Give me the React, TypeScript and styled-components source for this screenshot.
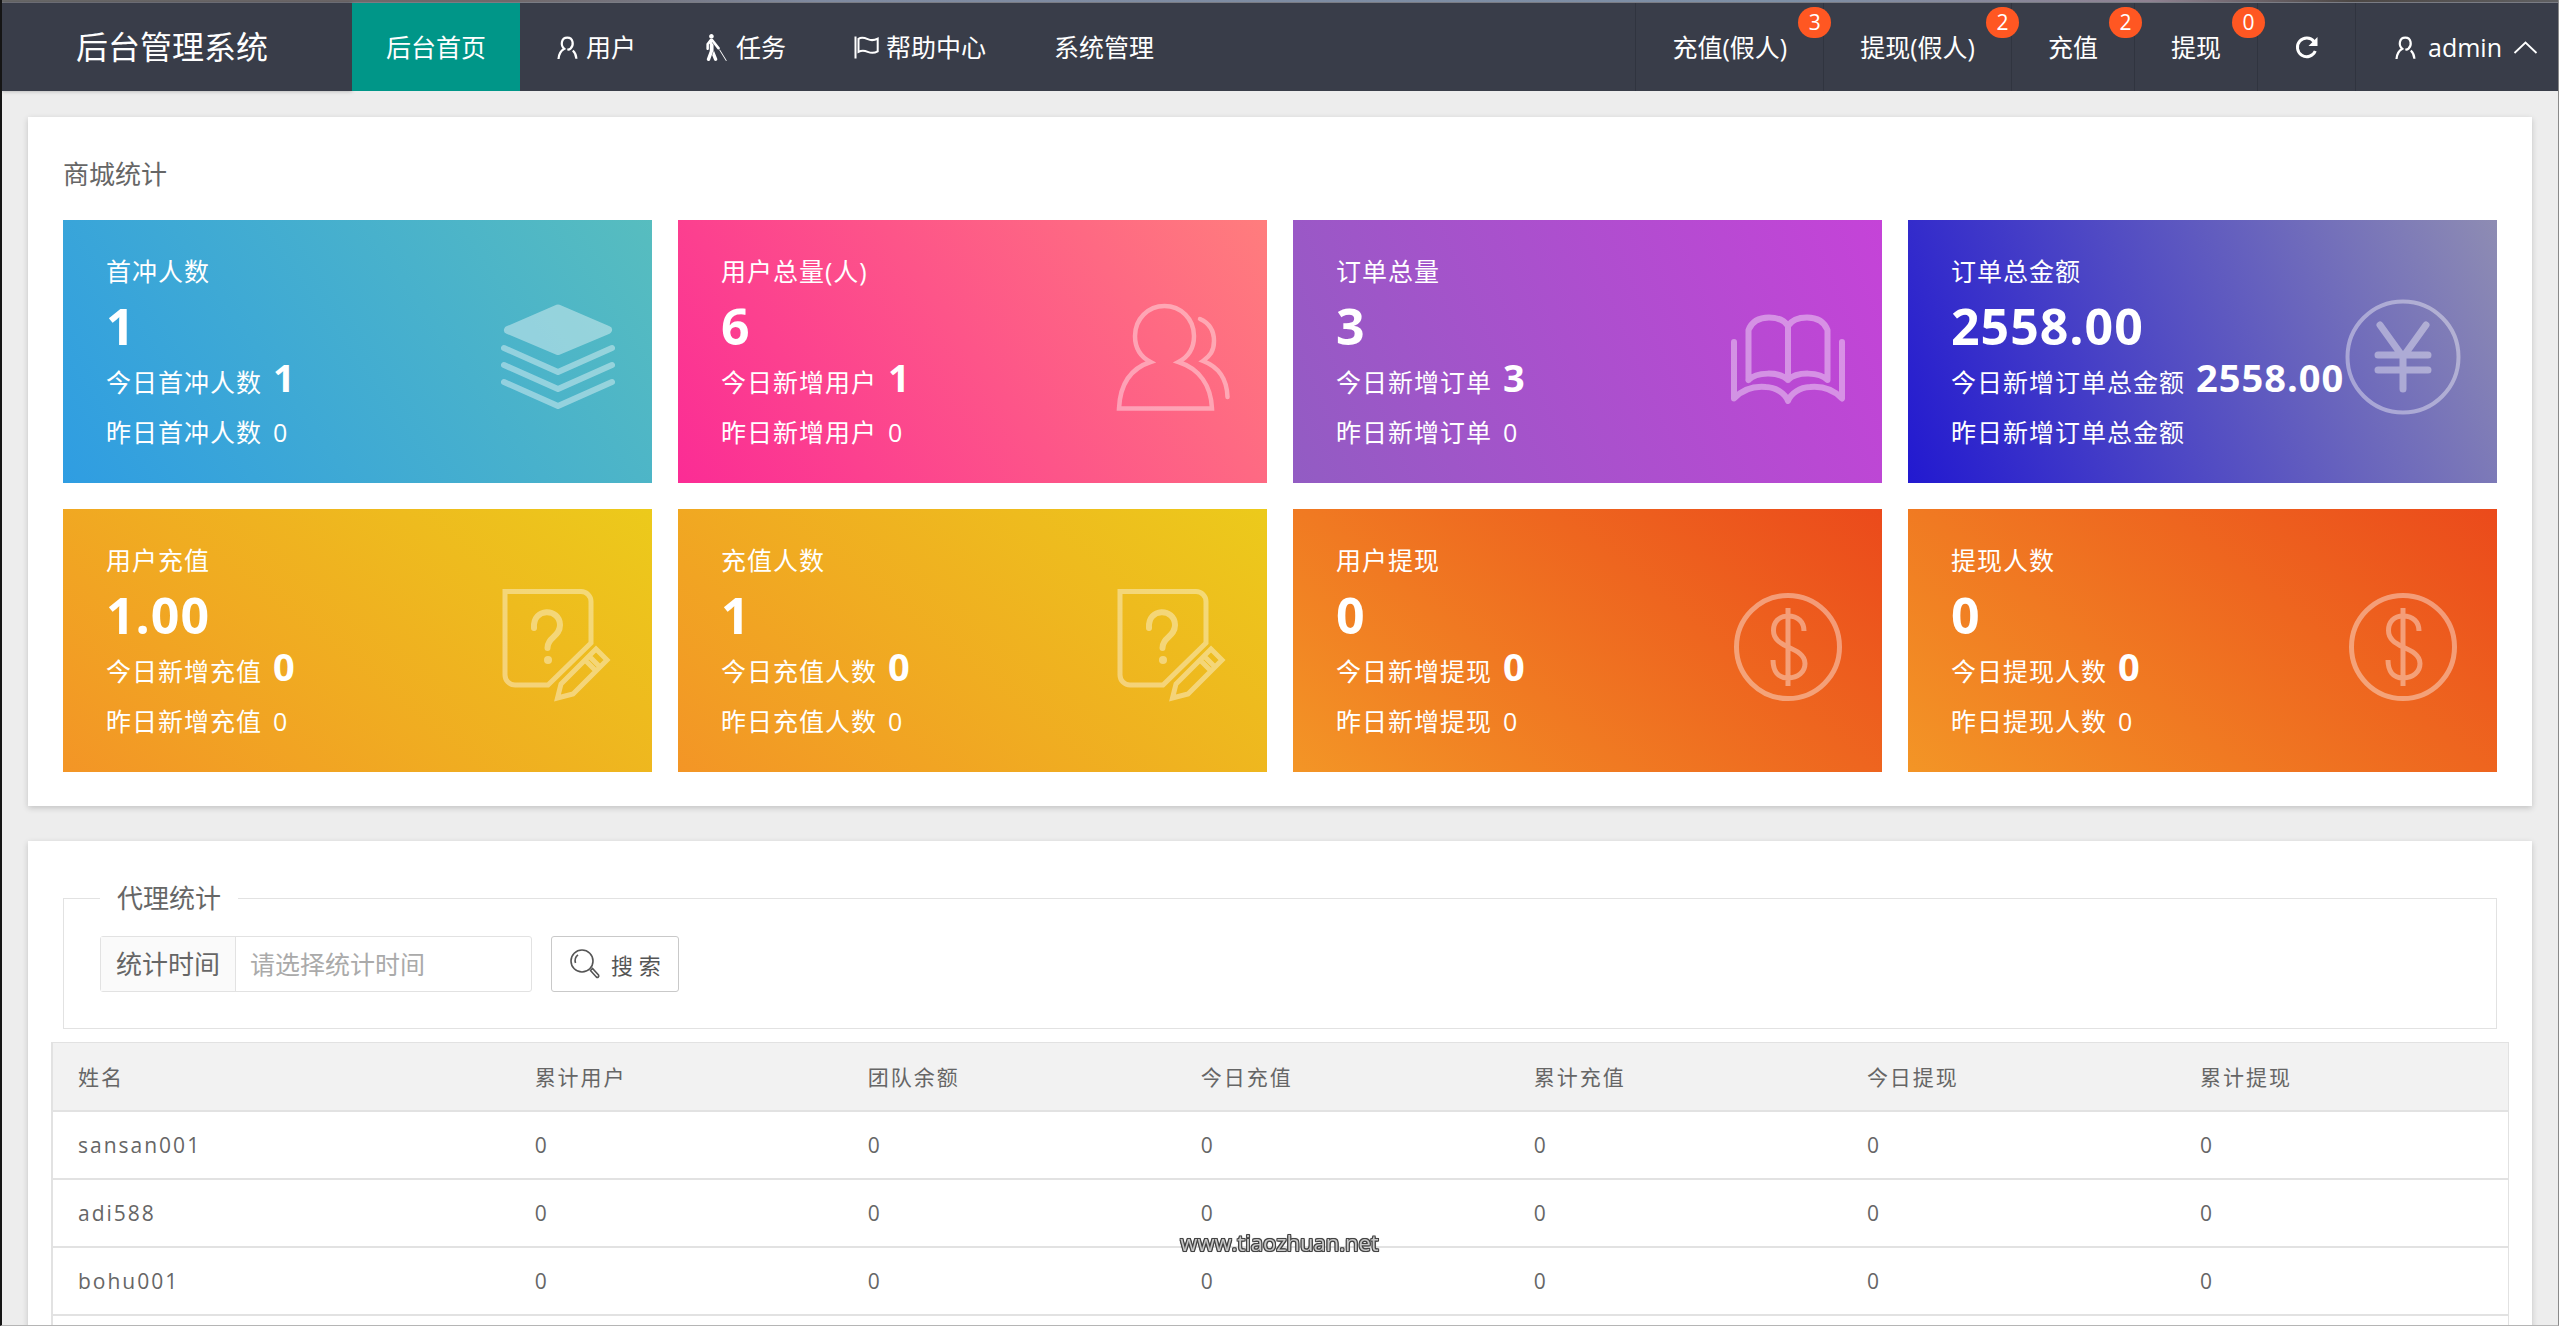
import React from "react";
import styled, { createGlobalStyle } from "styled-components";
import { FaBlind } from "react-icons/fa";

const GlobalStyle = createGlobalStyle`
  *, *::before, *::after { box-sizing: border-box; }
  body {
    margin: 0;
    background: #ededed;
    color: #666;
    font-family: "Open Sans", "Noto Sans CJK SC", sans-serif;
    font-size: 26px;
  }
  a { color: inherit; text-decoration: none; }
`;

const Shell = styled.div`
  height: 100vh;
  display: flex;
  flex-direction: column;
  overflow: hidden;
  border-left: 2px solid #151515;
  border-right: 1px solid #8a8a8a;
  border-bottom: 1px solid #b5b5b5;
`;

const TopStrip = styled.div`
  flex: none;
  height: 3px;
  margin-left: -2px;
  border-bottom: 1px solid #7a7c84;
  background: linear-gradient(90deg, #6a6a6a, #70686a 20%, #7f8aa0 32%, #7d8fa6 70%, #8f8292 84%, #4c4744 92%, #606062);
`;

const Header = styled.header`
  flex: none;
  height: 88px;
  display: flex;
  background: #393d49;
  color: #fff;
  font-size: 25px;
  line-height: 88px;
  white-space: nowrap;
`;

const Brand = styled.h1`
  margin: 0;
  width: 350px;
  padding-left: 74px;
  font-size: 32px;
  font-weight: 400;
  box-shadow: 0 0 4px rgba(0, 0, 0, 0.3);
`;

const Menu = styled.nav`
  display: flex;
  flex: 1;
`;

const MenuLink = styled.a<{ $active?: boolean }>`
  display: flex;
  align-items: center;
  gap: 7px;
  padding: 0 34px;
  background: ${(p) => (p.$active ? "#009688" : "transparent")};
`;

const Tools = styled.nav`
  display: flex;
`;

const ToolLink = styled.a<{ $wide?: boolean }>`
  position: relative;
  display: flex;
  align-items: center;
  gap: 11px;
  padding: 0 ${(p) => (p.$wide ? 20 : 36)}px 0 36px;
  border-left: 1px solid #30343f;
`;

const Badge = styled.span`
  position: absolute;
  z-index: 1;
  top: 4px;
  right: -8px;
  width: 33px;
  height: 31px;
  border-radius: 16px;
  background: #ff5722;
  font-size: 21px;
  line-height: 31px;
  text-align: center;
`;

const Glyph = styled.svg<{ $size?: number }>`
  flex: none;
  width: ${(p) => p.$size ?? 25}px;
  height: ${(p) => p.$size ?? 25}px;
  fill: none;
  stroke: currentColor;
`;

const Walker = styled(FaBlind)`
  flex: none;
  width: 25px;
  height: 27px;
`;

const Main = styled.main`
  flex: 1;
  min-height: 0;
  overflow: hidden;
  display: flex;
  flex-direction: column;
  gap: 35px;
  padding: 26px 26px 0;
`;

const Panel = styled.section`
  flex: none;
  background: #fff;
  padding: 39px 23px 34px;
  box-shadow: 0 2px 6px rgba(0, 0, 0, 0.18);
`;

const PanelTitle = styled.h2`
  margin: 0 12px 28px;
  font-size: 26px;
  font-weight: 400;
  line-height: 36px;
`;

const Tiles = styled.div`
  display: grid;
  grid-template-columns: repeat(4, 1fr);
  gap: 26px;
  margin: 0 12px;
`;

const Tile = styled.article<{ $bg: string }>`
  position: relative;
  padding: 26px 43px;
  background: ${(p) => p.$bg};
  color: #fff;
  font-size: 25px;
  letter-spacing: 1px;
  white-space: nowrap;
`;

const TileTitle = styled.h3`
  margin: 0;
  font-size: 25px;
  font-weight: 400;
  line-height: 50px;
`;

const TileTotal = styled.p`
  margin: 0;
  font-size: 50px;
  font-weight: 700;
  line-height: 61px;
`;

const TileLine = styled.p`
  display: flex;
  align-items: baseline;
  gap: 11px;
  margin: 0;
  line-height: 50px;
`;

const Today = styled.strong`
  font-size: 38px;
  line-height: 40px;
`;

const TileArt = styled.svg`
  position: absolute;
  top: 76px;
  right: 33px;
  width: 122px;
  height: 122px;
  opacity: 0.4;
  fill: none;
  stroke: #fff;
  stroke-linecap: round;
  stroke-linejoin: round;
`;

const Filter = styled.fieldset`
  min-width: 0;
  margin: 0 12px 13px;
  padding: 20px 36px 36px;
  border: 1px solid #e2e2e2;
`;

const Legend = styled.legend`
  padding: 0 17px;
  line-height: 36px;
`;

const FilterForm = styled.form`
  display: flex;
  gap: 19px;
`;

const Field = styled.div`
  display: flex;
  width: 432px;
  height: 56px;
  border: 1px solid #e2e2e2;
  border-radius: 3px;
`;

const FieldLabel = styled.label`
  flex: none;
  padding: 0 15px;
  border-right: 1px solid #e2e2e2;
  background: #fafafa;
  line-height: 54px;
`;

const FieldInput = styled.input`
  flex: 1;
  min-width: 0;
  padding: 0 14px;
  border: 0;
  outline: 0;
  background: transparent;
  color: #666;
  font-family: inherit;
  font-size: 25px;
  &::placeholder { color: #aaa; opacity: 1; }
`;

const SearchButton = styled.button`
  display: flex;
  align-items: center;
  gap: 10px;
  height: 56px;
  padding: 0 17px;
  border: 1px solid #c9c9c9;
  border-radius: 3px;
  background: #fff;
  color: #555;
  font-family: inherit;
  font-size: 22px;
  white-space: pre;
`;

const DataTable = styled.table`
  width: 100%;
  table-layout: fixed;
  border-collapse: separate;
  border-spacing: 0;
  border: 1px solid #e2e2e2;
  border-left-width: 2px;
  font-size: 21px;
  letter-spacing: 2px;
`;

const HeadCell = styled.th<{ $first?: boolean }>`
  width: ${(p) => (p.$first ? "18.6%" : "auto")};
  height: 69px;
  padding: 0 25px 2px;
  border-bottom: 2px solid #e2e2e2;
  background: #f2f2f2;
  font-weight: 400;
  text-align: left;
`;

const Cell = styled.td`
  height: 68px;
  padding: 0 25px;
  border-bottom: 2px solid #e2e2e2;
`;

const SiteMark = styled.div`
  position: fixed;
  left: 50%;
  bottom: 68px;
  transform: translateX(-50%);
  color: #c8c8c8;
  font-size: 22px;
  line-height: 32px;
  text-shadow: 1px 0 #444, -1px 0 #444, 0 1px #444, 0 -1px #444, 1px 1px #444, -1px -1px #444, 1px -1px #444, -1px 1px #444, 0 0 2px #444;
`;

const UserGlyph = () => (
  <Glyph viewBox="0 0 25 25" strokeWidth="2.2">
    <path d="M4.5 24c.3-5 2.300-8.200 5.800-10.200C6.300 10.500 7 2.600 13.300 2.600S20 10.500 16.500 13.600c-1.500 1.300-2.500.9-3.200.9M18.800 15.500c2.200 2 3.400 4.700 3.600 8.200" />
  </Glyph>
);

const FlagGlyph = () => (
  <Glyph viewBox="0 0 25 25" strokeWidth="2">
    <path d="M1.500 1.500v22M4.500 3.800c3-1.800 6-1 9.200.4 3.300 1.400 6.300 1.400 10-.6v12.800c-3.700 2-6.700 1.800-10 .4-3.200-1.400-6.200-1.600-9.200 0z" />
  </Glyph>
);

const RefreshGlyph = () => (
  <Glyph viewBox="0 0 25 25" strokeWidth="3">
    <path d="M20 6.500A9.300 9.300 0 1 0 21.300 16" />
    <path d="M23.500 2v9h-9z" fill="currentColor" stroke="none" />
  </Glyph>
);

const CaretGlyph = () => (
  <Glyph viewBox="0 0 25 25" strokeWidth="1.800">
    <path d="M1.500 18L12.500 7.500 23.500 18" />
  </Glyph>
);

const SearchGlyph = () => (
  <Glyph viewBox="0 0 32 32" $size={32} strokeWidth="1.600">
    <circle cx="13" cy="13" r="11" />
    <path d="M6.500 15c-1-3.500.2-6.500 2.500-8.200M21.500 22.500l2-2 6 6.500c1 1.800-.8 3-2.200 2z" />
  </Glyph>
);

const layersArt = (
  <>
    <path d="M61 12.500L111 34 61 55 11 34z" fill="#fff" strokeWidth="8" />
    <path d="M7 52l54 24 54-24M7 69l54 24 54-24M7 86l54 24 54-24" strokeWidth="6" />
  </>
);

const peopleArt = (
  <path
    strokeWidth="4.500"
    strokeLinejoin="miter"
    d="M38.500 66C27 60 23 50 23 40c0-17 13-30 29.500-30S82 23 82 40c0 10-4 20-15.500 26C88 73 99 90 100 112.500H7C8 90 17 73 38.500 66zM88 23c9 4 14 12 14 22s-4 15-11 20c16 6 24 19 24.500 36"
  />
);

const bookArt = (
  <path
    strokeWidth="6"
    d="M7 46v56.500C16 93 28 90 39 91c10 .5 19 6 22 14 3-8 12-13.500 22-14 11-1 23 2 32 11.500V46M21.500 84V34C25 25 33 21.500 42 21.500c8 0 15 2 19 8.500 4-6.500 11-8.500 19-8.500 9 0 17 3.500 20.500 12.500v50C93 76 70 75 61 84c-9-9-32-8-39.500 0M61 30v54"
  />
);

const yenArt = (
  <>
    <circle cx="61" cy="61" r="55.500" strokeWidth="4" />
    <path d="M38 29l23 32 23-32M61 60v33M36 59h50M36 74h50" strokeWidth="7" />
  </>
);

const formArt = (
  <>
    <path
      strokeWidth="5"
      strokeLinejoin="miter"
      strokeLinecap="butt"
      d="M8 6.500h76a10 10 0 0 1 10 10V58L51 100H18A10 10 0 0 1 8 90zM99 64l11 11-34 34-15.500 4L64 99zM92 71l10.500 10.500M88 75l10 10"
    />
    <path d="M37 43c-1.500-21 26-20 26-3 0 12-12.500 12-12.500 23" strokeWidth="6" />
    <circle cx="51" cy="75" r="4" fill="#fff" stroke="none" />
  </>
);

const dollarArt = (
  <>
    <circle cx="61" cy="62" r="51.500" strokeWidth="5" />
    <path
      strokeWidth="5"
      strokeLinecap="butt"
      d="M61 23v78M77 46c0-9-6-15-16-15-9 0-14.500 6-14.500 14.500C46.500 54 53 58 61 62c9 4 17 8 17 16.500S71 93 61 93c-10 0-15-7-15-18"
    />
  </>
);

const YELLOW = "linear-gradient(-141deg, #ecca1b, #f39526)";
const ORANGE = "linear-gradient(-141deg, #eb4a1b, #f39526)";

const tiles = [
  { title: "首冲人数", total: "1", today: ["今日首冲人数", "1"], last: ["昨日首冲人数", "0"], bg: "linear-gradient(-125deg, #57bdbf, #2f9de2)", art: layersArt },
  { title: "用户总量(人)", total: "6", today: ["今日新增用户", "1"], last: ["昨日新增用户", "0"], bg: "linear-gradient(-125deg, #ff7d7d, #fb2c95)", art: peopleArt },
  { title: "订单总量", total: "3", today: ["今日新增订单", "3"], last: ["昨日新增订单", "0"], bg: "linear-gradient(-113deg, #c543d8, #925cc3)", art: bookArt },
  { title: "订单总金额", total: "2558.00", today: ["今日新增订单总金额", "2558.00"], last: ["昨日新增订单总金额"], bg: "linear-gradient(-113deg, #8e8cb3, #2219d0)", art: yenArt },
  { title: "用户充值", total: "1.00", today: ["今日新增充值", "0"], last: ["昨日新增充值", "0"], bg: YELLOW, art: formArt },
  { title: "充值人数", total: "1", today: ["今日充值人数", "0"], last: ["昨日充值人数", "0"], bg: YELLOW, art: formArt },
  { title: "用户提现", total: "0", today: ["今日新增提现", "0"], last: ["昨日新增提现", "0"], bg: ORANGE, art: dollarArt },
  { title: "提现人数", total: "0", today: ["今日提现人数", "0"], last: ["昨日提现人数", "0"], bg: ORANGE, art: dollarArt },
];

const alerts = [
  { label: "充值(假人)", count: 3 },
  { label: "提现(假人)", count: 2 },
  { label: "充值", count: 2 },
  { label: "提现", count: 0 },
];

const columns = ["姓名", "累计用户", "团队余额", "今日充值", "累计充值", "今日提现", "累计提现"];
const agents = ["sansan001", "adi588", "bohu001"];

export default function App() {
  return (
    <Shell>
      <GlobalStyle />
      <TopStrip />
      <Header>
        <Brand>后台管理系统</Brand>
        <Menu>
          <MenuLink href="#home" $active>后台首页</MenuLink>
          <MenuLink href="#users"><UserGlyph />用户</MenuLink>
          <MenuLink href="#tasks"><Walker />任务</MenuLink>
          <MenuLink href="#help"><FlagGlyph />帮助中心</MenuLink>
          <MenuLink href="#system">系统管理</MenuLink>
        </Menu>
        <Tools>
          {alerts.map((a) => (
            <ToolLink href="#alerts" key={a.label}>
              {a.label}
              <Badge>{a.count}</Badge>
            </ToolLink>
          ))}
          <ToolLink href="#refresh" aria-label="刷新"><RefreshGlyph /></ToolLink>
          <ToolLink href="#account" $wide>
            <UserGlyph />
            admin
            <CaretGlyph />
          </ToolLink>
        </Tools>
      </Header>
      <Main>
        <Panel>
          <PanelTitle>商城统计</PanelTitle>
          <Tiles>
            {tiles.map((t) => (
              <Tile key={t.title} $bg={t.bg}>
                <TileArt viewBox="0 0 122 122" aria-hidden="true">{t.art}</TileArt>
                <TileTitle>{t.title}</TileTitle>
                <TileTotal>{t.total}</TileTotal>
                <TileLine>
                  <span>{t.today[0]}</span>
                  <Today>{t.today[1]}</Today>
                </TileLine>
                <TileLine>
                  <span>{t.last[0]}</span>
                  {t.last[1] && <span>{t.last[1]}</span>}
                </TileLine>
              </Tile>
            ))}
          </Tiles>
        </Panel>
        <Panel>
          <Filter>
            <Legend>代理统计</Legend>
            <FilterForm>
              <Field>
                <FieldLabel htmlFor="stat-time">统计时间</FieldLabel>
                <FieldInput id="stat-time" placeholder="请选择统计时间" />
              </Field>
              <SearchButton type="button"><SearchGlyph />搜 索</SearchButton>
            </FilterForm>
          </Filter>
          <DataTable>
            <thead>
              <tr>
                {columns.map((c, i) => (
                  <HeadCell key={c} $first={i === 0}>{c}</HeadCell>
                ))}
              </tr>
            </thead>
            <tbody>
              {agents.map((name) => (
                <tr key={name}>
                  <Cell>{name}</Cell>
                  {columns.slice(1).map((c) => (
                    <Cell key={c}>0</Cell>
                  ))}
                </tr>
              ))}
              <tr>
                {columns.map((c) => (
                  <Cell key={c} />
                ))}
              </tr>
            </tbody>
          </DataTable>
        </Panel>
      </Main>
      <SiteMark>www.tiaozhuan.net</SiteMark>
    </Shell>
  );
}
